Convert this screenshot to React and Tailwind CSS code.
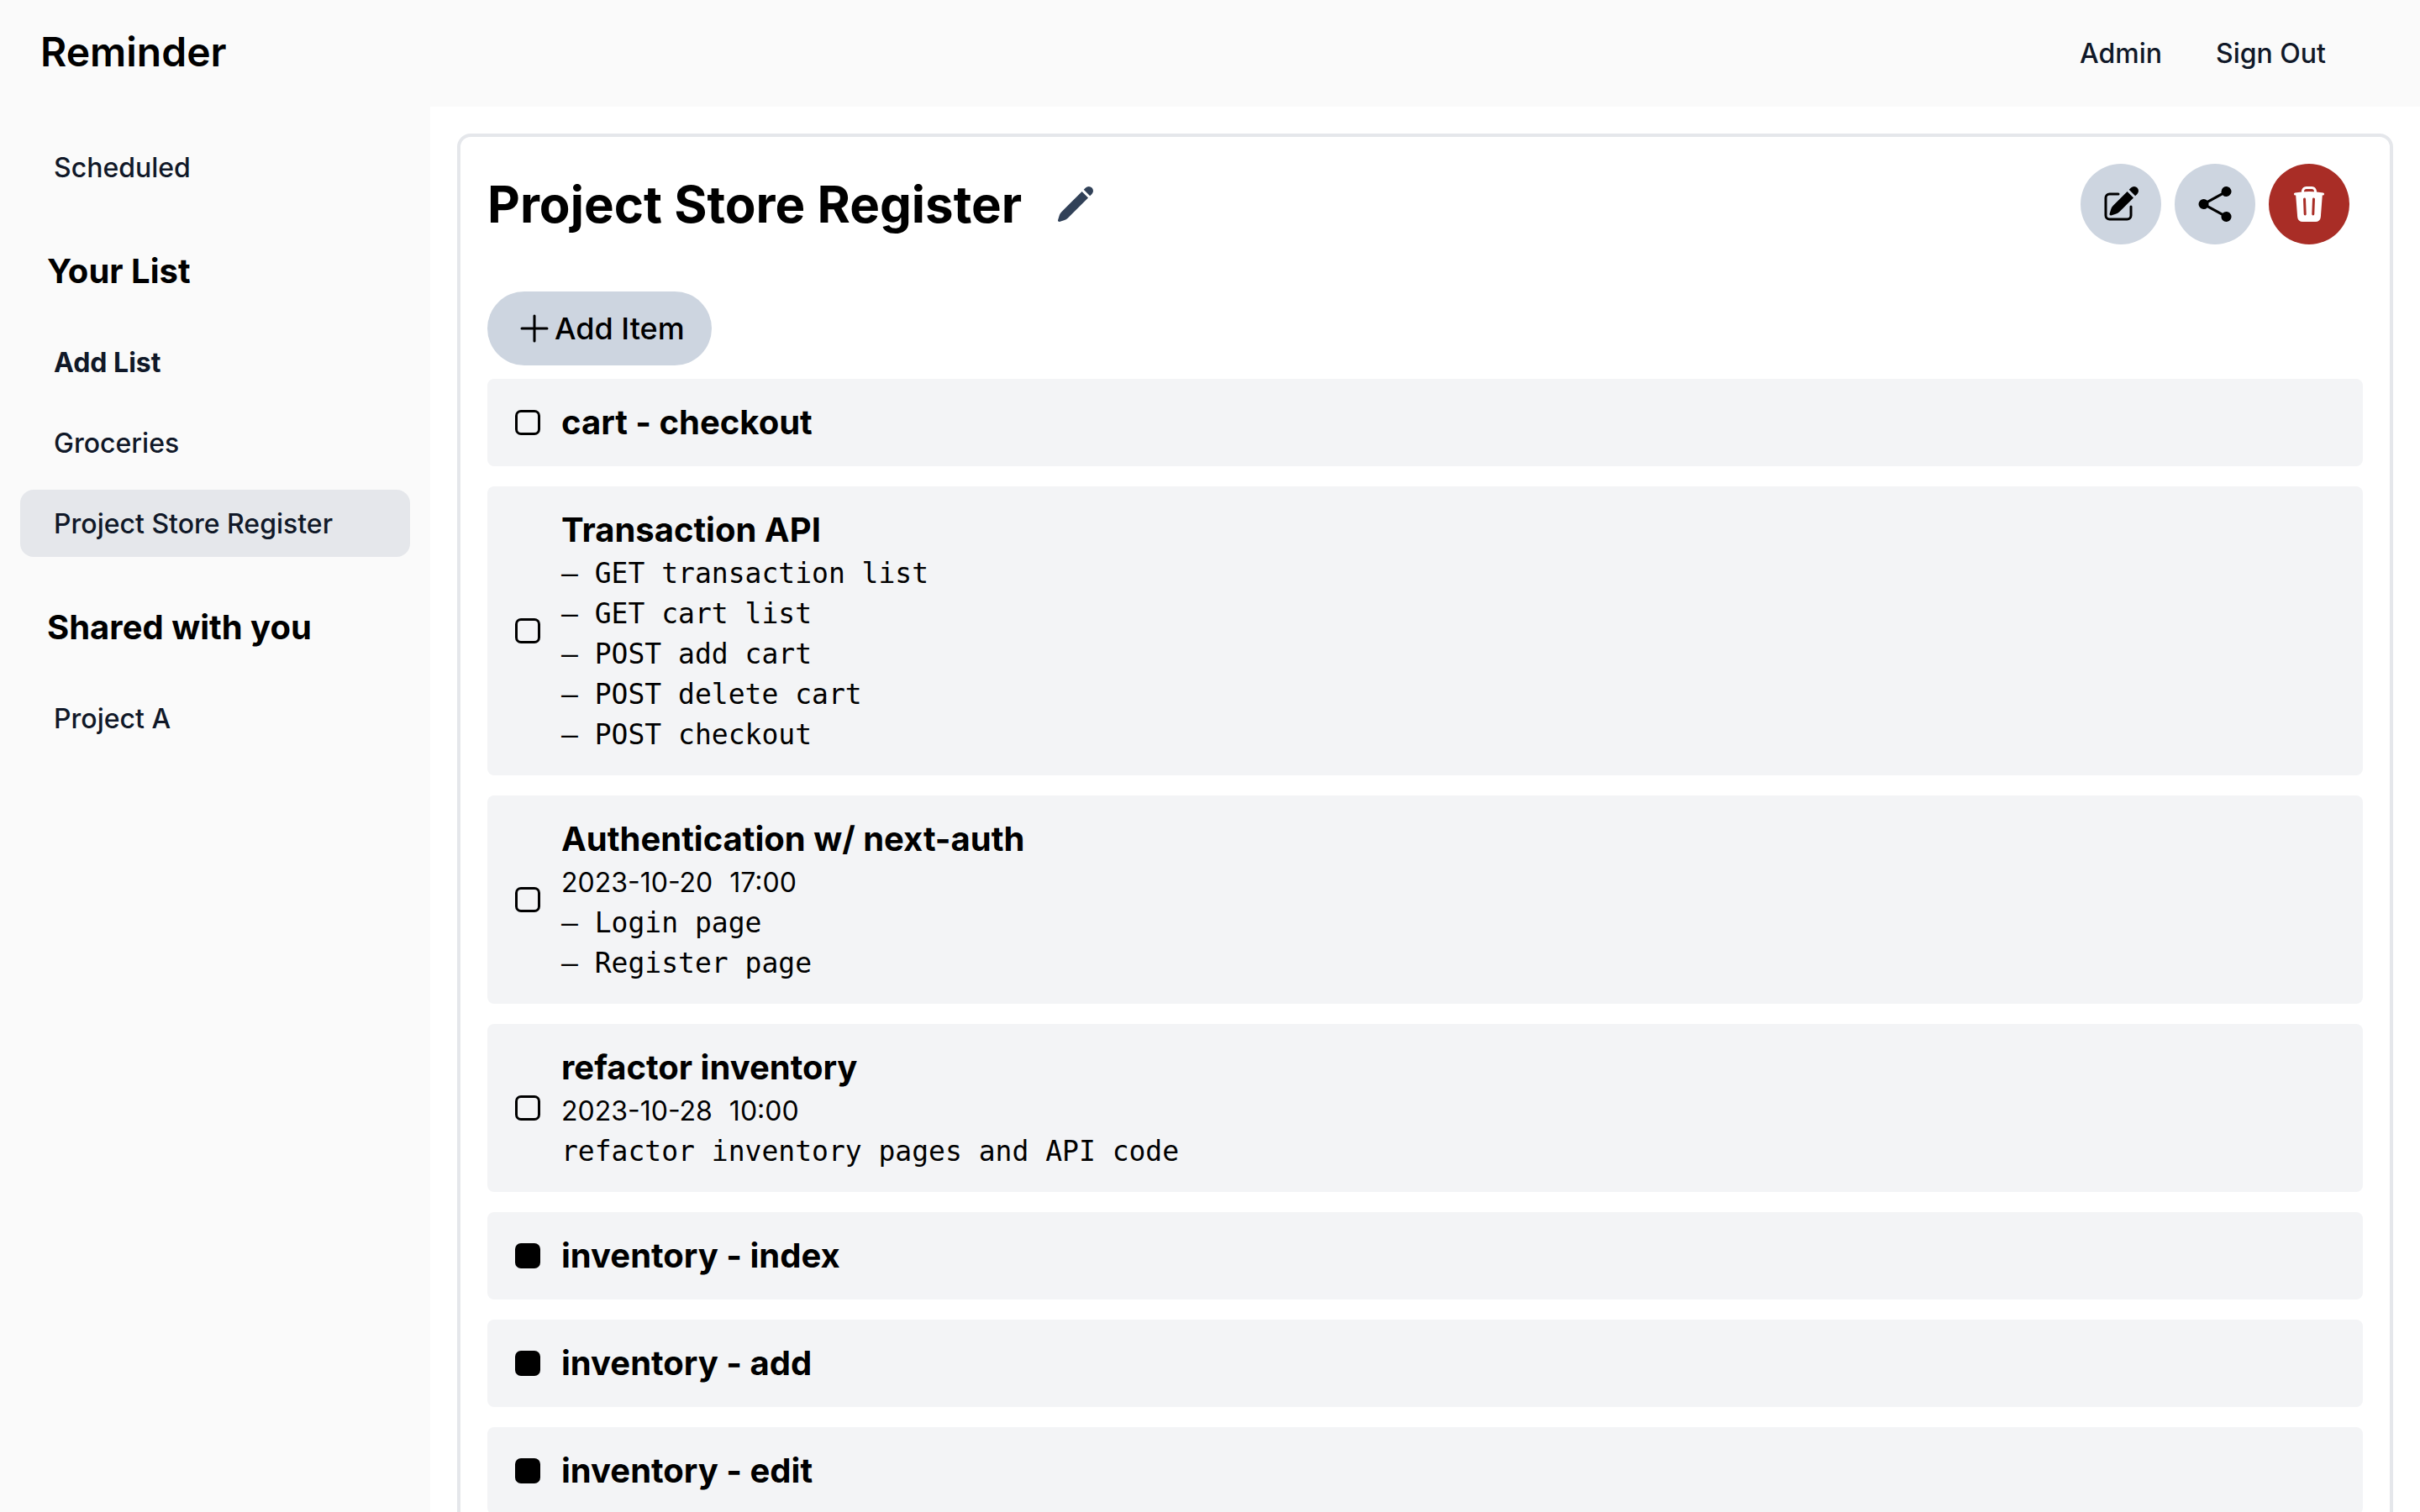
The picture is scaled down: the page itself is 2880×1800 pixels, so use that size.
import { useState } from "react";
import { HiOutlinePlus, HiPencil, HiPencilSquare, HiShare, HiTrash } from "react-icons/hi2";

const initialItems = [
  { title: "cart - checkout" },
  {
    title: "Transaction API",
    note: "– GET transaction list\n– GET cart list\n– POST add cart\n– POST delete cart\n– POST checkout",
  },
  {
    title: "Authentication w/ next-auth",
    date: "2023-10-20",
    time: "17:00",
    note: "– Login page\n– Register page",
  },
  {
    title: "refactor inventory",
    date: "2023-10-28",
    time: "10:00",
    note: "refactor inventory pages and API code",
  },
  { title: "inventory - index", done: true },
  { title: "inventory - add", done: true },
  { title: "inventory - edit", done: true },
];

function NavLink({ children, active, bold }) {
  return (
    <a
      href="#"
      aria-current={active ? "page" : undefined}
      className={`block rounded-2xl px-10 pt-[17px] pb-[15px] text-[32px] leading-[48px] text-gray-900 ${
        bold ? "font-bold" : "font-medium"
      } ${active ? "bg-gray-200" : ""}`}
    >
      {children}
    </a>
  );
}

function NavSection({ title, children }) {
  return (
    <section className="pt-14">
      <h2 className="px-8 text-[40px] leading-[56px] font-bold">{title}</h2>
      <div className="mt-10 flex flex-col gap-4">{children}</div>
    </section>
  );
}

function RoundButton({ label, icon: Icon, danger }) {
  return (
    <button
      type="button"
      aria-label={label}
      className={`rounded-full p-6 ${danger ? "bg-[#a92d26] text-white" : "bg-[#cdd5e0] text-black"}`}
    >
      <Icon className="size-12" />
    </button>
  );
}

function Item({ item, onToggle }) {
  return (
    <li>
      <label className="flex items-center gap-6 rounded-lg bg-gray-100 px-8 py-6">
        <span className="flex size-8 shrink-0 items-center justify-center">
          <input
            type="checkbox"
            checked={Boolean(item.done)}
            onChange={onToggle}
            className="size-[30px] appearance-none rounded-[7px] border-3 border-black checked:bg-black"
          />
        </span>
        <span className="block min-w-0">
          <span className="block text-[40px] leading-[56px] font-bold">{item.title}</span>
          {item.date && (
            <span className="flex gap-5 text-[32px] leading-[48px]">
              <time>{item.date}</time>
              <time>{item.time}</time>
            </span>
          )}
          {item.note && (
            <span className="block font-['DejaVu_Sans_Mono',monospace] text-[33px] leading-[48px] whitespace-pre-wrap">
              {item.note}
            </span>
          )}
        </span>
      </label>
    </li>
  );
}

export default function App() {
  const [items, setItems] = useState(initialItems);
  const toggle = (index) =>
    setItems(items.map((item, i) => (i === index ? { ...item, done: !item.done } : item)));

  return (
    <div className="flex h-screen flex-col overflow-hidden bg-white font-[Inter,sans-serif] text-black">
      <header className="flex h-[127px] shrink-0 items-center justify-between bg-[#fafafa] pr-28 pl-12">
        <a href="#" className="pb-1 text-[48px] leading-[64px] font-semibold">
          Reminder
        </a>
        <nav className="flex gap-16 text-[32px] leading-[48px] font-medium text-gray-900">
          <a href="#">Admin</a>
          <a href="#">Sign Out</a>
        </nav>
      </header>

      <div className="flex min-h-0 flex-1">
        <aside className="w-[512px] shrink-0 bg-[#fafafa] px-6 pt-8">
          <NavLink>Scheduled</NavLink>
          <NavSection title="Your List">
            <NavLink bold>Add List</NavLink>
            <NavLink>Groceries</NavLink>
            <NavLink active>Project Store Register</NavLink>
          </NavSection>
          <NavSection title="Shared with you">
            <NavLink>Project A</NavLink>
          </NavSection>
        </aside>

        <main className="min-w-0 flex-1 overflow-hidden p-8">
          <div className="rounded-2xl border-4 border-gray-200 p-8">
            <div className="flex items-center justify-between pr-4">
              <div className="flex items-center gap-10">
                <h1 className="text-[60px] leading-[72px] font-bold">Project Store Register</h1>
                <button type="button" aria-label="Rename list" className="text-slate-700">
                  <HiPencil className="size-12" />
                </button>
              </div>
              <div className="flex gap-4">
                <RoundButton label="Edit list" icon={HiPencilSquare} />
                <RoundButton label="Share list" icon={HiShare} />
                <RoundButton label="Delete list" icon={HiTrash} danger />
              </div>
            </div>
            <button
              type="button"
              className="mt-14 flex items-center rounded-full bg-[#cdd5e0] px-8 py-4 text-[36px] leading-[56px] font-medium"
            >
              <HiOutlinePlus className="size-12" />
              Add Item
            </button>
            <ul className="mt-4 flex flex-col gap-6">
              {items.map((item, i) => (
                <Item key={item.title} item={item} onToggle={() => toggle(i)} />
              ))}
            </ul>
          </div>
        </main>
      </div>
    </div>
  );
}
